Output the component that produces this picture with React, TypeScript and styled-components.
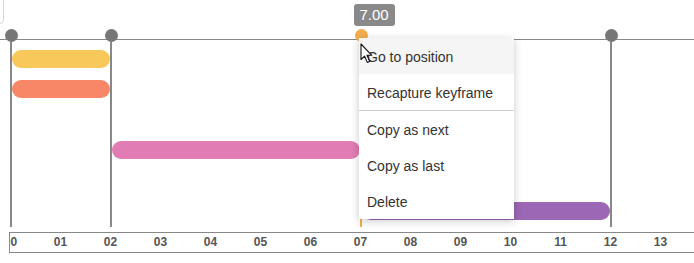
import styled, { createGlobalStyle } from 'styled-components';

const PX_PER_UNIT = 50;
const ORIGIN = 11;

const toX = (t: number) => ORIGIN + t * PX_PER_UNIT;

const keyframes = [
    { t: 0, active: false },
    { t: 2, active: false },
    { t: 7, active: true },
    { t: 12, active: false },
];

const lanes: ({ from: number; to: number; color: string } | null)[] = [
    { from: 0, to: 2, color: '#f8c85a' },
    { from: 0, to: 2, color: '#f88767' },
    null,
    { from: 2, to: 7, color: '#e27cb4' },
    null,
    { from: 7, to: 12, color: '#9c67b4' },
];

const ticks = Array.from({ length: 14 }, (_, i) => String(i).padStart(2, '0'));

const menuItems = [
    { label: 'Go to position', hover: true },
    { label: 'Recapture keyframe', divider: true },
    { label: 'Copy as next' },
    { label: 'Copy as last' },
    { label: 'Delete' },
];

const App = (): JSX.Element => {
    return (
        <>
            <GlobalStyle />
            <Page>
                <EdgePanel />
                <Tracks>
                    <Lanes>
                        {lanes.map((lane, i) => (
                            <Lane key={i}>
                                {lane && (
                                    <Bar
                                        $color={lane.color}
                                        style={{
                                            left: toX(lane.from) + 1,
                                            width: (lane.to - lane.from) * PX_PER_UNIT - 2,
                                        }}
                                    />
                                )}
                            </Lane>
                        ))}
                    </Lanes>
                    {keyframes.map((k) => (
                        <Marker key={k.t} style={{ left: toX(k.t) - 6.5 }}>
                            {k.active && <Tip>{k.t.toFixed(2)}</Tip>}
                            <Dot $active={k.active} />
                            <Stem $active={k.active} />
                        </Marker>
                    ))}
                </Tracks>
                <Axis>
                    {ticks.map((label) => (
                        <Tick key={label}>{label}</Tick>
                    ))}
                </Axis>
                <Menu>
                    {menuItems.map((item) => (
                        <div key={item.label}>
                            <MenuItem className={item.hover ? 'hover' : ''}>{item.label}</MenuItem>
                            {item.divider && <Divider />}
                        </div>
                    ))}
                </Menu>
                <Cursor width="14" height="21" viewBox="0 0 14 21">
                    <path
                        d="M1 1 L1 16.5 L4.6 13.2 L7.3 19.4 L9.6 18.4 L7 12.3 L11.8 12.3 Z"
                        fill="#fff"
                        stroke="#111"
                        strokeWidth="1.1"
                        strokeLinejoin="round"
                    />
                </Cursor>
            </Page>
        </>
    );
};

const GlobalStyle = createGlobalStyle`
    html, body {
        margin: 0;
        background: #fff;
        font-family: 'Liberation Sans', Arial, sans-serif;
    }
`;

const Page = styled.div`
    height: 263px;
    overflow: hidden;
    position: relative;
    width: 694px;
`;

const EdgePanel = styled.div`
    border: 1px solid #d6d6d6;
    border-radius: 4px;
    box-sizing: border-box;
    height: 34px;
    left: -50px;
    position: absolute;
    top: -10px;
    width: 54px;
`;

const Tracks = styled.div`
    border-top: 1px solid #888;
    height: 187px;
    margin-top: 39px;
    position: relative;
`;

const Lanes = styled.div`
    display: flex;
    flex-direction: column;
    gap: 12.4px;
    padding-top: 10px;
`;

const Lane = styled.div`
    height: 18px;
    position: relative;
`;

const Bar = styled.div<{ $color: string }>`
    background: ${(p) => p.$color};
    border-radius: 9px;
    height: 18px;
    position: absolute;
    top: 0;
`;

const Marker = styled.div`
    align-items: center;
    bottom: 0;
    display: flex;
    flex-direction: column;
    position: absolute;
    top: -11px;
    width: 13px;
`;

const Dot = styled.div<{ $active: boolean }>`
    background: ${(p) => (p.$active ? '#f2ad4f' : '#777')};
    border-radius: 50%;
    flex-shrink: 0;
    height: 13px;
    width: 13px;
`;

const Stem = styled.div<{ $active: boolean }>`
    background: ${(p) => (p.$active ? '#f2ad4f' : '#888')};
    flex: 1;
    width: 2px;
`;

const Tip = styled.div`
    background: #898989;
    border-radius: 3px;
    color: #fff;
    font-size: 15px;
    height: 22px;
    left: -1px;
    line-height: 22px;
    padding: 0 6px;
    position: absolute;
    top: -25px;
    white-space: nowrap;
`;

const Axis = styled.div`
    border-bottom: 1px solid #888;
    border-left: 1px solid #888;
    border-top: 1px solid #888;
    display: flex;
    height: 19px;
    margin-left: 9px;
    margin-top: 5px;
    overflow: hidden;
`;

const Tick = styled.div`
    color: #555;
    flex-shrink: 0;
    font-size: 12px;
    font-weight: bold;
    line-height: 19px;
    text-align: center;
    width: 50px;

    &:first-child {
        margin-left: -24.5px;
    }
`;

const Menu = styled.div`
    background: #fff;
    box-shadow: 0 2px 8px rgba(0, 0, 0, 0.22);
    left: 359px;
    position: absolute;
    top: 38px;
    width: 155px;
    z-index: 10;
`;

const MenuItem = styled.div`
    box-sizing: border-box;
    color: #333;
    font-size: 14px;
    height: 36px;
    line-height: 36px;
    padding: 1px 0 0 8px;
    white-space: nowrap;

    &.hover {
        background: #f5f5f5;
    }
`;

const Divider = styled.div`
    background: #ccc;
    height: 1px;
`;

const Cursor = styled.svg`
    left: 360px;
    position: absolute;
    top: 43px;
    z-index: 11;
`;

export default App;
